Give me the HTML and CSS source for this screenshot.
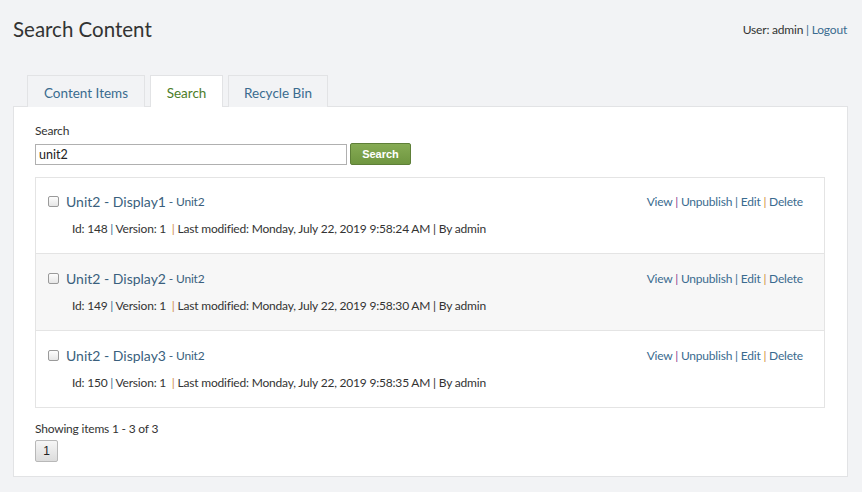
FILE: index.html
```html
<!DOCTYPE html>
<html>
<head>
<meta charset="utf-8">
<link rel="stylesheet" href="styles.css">
</head>
<body>
<div class="page">
  <header class="top">
    <h1 class="title">Search Content</h1>
    <div class="user">User: admin <span class="sep">|</span> <a class="link">Logout</a></div>
  </header>
  <nav class="tabs">
    <div class="tab t1">Content Items</div>
    <div class="tab t2 active">Search</div>
    <div class="tab t3">Recycle Bin</div>
  </nav>
  <section class="panel">
    <label class="label">Search</label>
    <div class="searchrow">
      <input class="input" type="text" value="unit2">
      <button class="btn">Search</button>
    </div>
    <div class="list">
      <div class="row">
        <div class="row-head">
          <div class="row-title"><span class="cb"></span><a class="name">Unit2 - Display1</a><span class="type"> - Unit2</span></div>
          <div class="actions"><a class="link">View</a> <span class="s1">|</span> <a class="link">Unpublish</a> <span class="s2">|</span> <a class="link">Edit</a> <span class="s3">|</span> <a class="link">Delete</a></div>
        </div>
        <div class="meta">Id: 148 <span class="s2">|</span> Version: 1 &nbsp;<span class="s3">|</span> Last modified: Monday, July 22, 2019 9:58:24 AM | By admin</div>
      </div>
      <div class="row alt">
        <div class="row-head">
          <div class="row-title"><span class="cb"></span><a class="name">Unit2 - Display2</a><span class="type"> - Unit2</span></div>
          <div class="actions"><a class="link">View</a> <span class="s1">|</span> <a class="link">Unpublish</a> <span class="s2">|</span> <a class="link">Edit</a> <span class="s3">|</span> <a class="link">Delete</a></div>
        </div>
        <div class="meta">Id: 149 <span class="s2">|</span> Version: 1 &nbsp;<span class="s3">|</span> Last modified: Monday, July 22, 2019 9:58:30 AM | By admin</div>
      </div>
      <div class="row">
        <div class="row-head">
          <div class="row-title"><span class="cb"></span><a class="name">Unit2 - Display3</a><span class="type"> - Unit2</span></div>
          <div class="actions"><a class="link">View</a> <span class="s1">|</span> <a class="link">Unpublish</a> <span class="s2">|</span> <a class="link">Edit</a> <span class="s3">|</span> <a class="link">Delete</a></div>
        </div>
        <div class="meta">Id: 150 <span class="s2">|</span> Version: 1 &nbsp;<span class="s3">|</span> Last modified: Monday, July 22, 2019 9:58:35 AM | By admin</div>
      </div>
    </div>
    <div class="showing">Showing items 1 - 3 of 3</div>
    <div class="pager"><span class="pagebtn">1</span></div>
  </section>
</div>
</body>
</html>
```
FILE: styles.css
```css
* { box-sizing: border-box; }
html, body { margin: 0; padding: 0; }
body {
  background: #f2f3f5;
  font-family: Lato, "Open Sans", sans-serif;
  color: #333;
  font-size: 12px;
  letter-spacing: -0.2px;
}
.page { padding: 0 15px 0 13px; width: 862px; }
.top {
  display: flex;
  justify-content: space-between;
  align-items: flex-start;
  height: 75px;
}
.title {
  margin: 0;
  padding-top: 15px;
  font-size: 20.5px;
  font-weight: 400;
  line-height: 28px;
  letter-spacing: 0;
  color: #333;
}
.user {
  padding-top: 21px;
  font-size: 12px;
  line-height: 18px;
  color: #333;
}
.link { color: #3a6b8f; text-decoration: none; }
.sep { color: #3a6b8f; }
.tabs {
  display: flex;
  gap: 5px;
  padding-left: 14px;
  height: 31px;
  position: relative;
  z-index: 1;
}
.tab {
  border: 1px solid #e2e3e5;
  border-bottom: none;
  background: #f2f3f5;
  color: #3a6b8f;
  font-size: 13.5px;
  letter-spacing: 0;
  line-height: 35px;
  height: 32px;
  text-align: center;
  white-space: nowrap;
}
.t1 { width: 118px; }
.t2 { width: 73px; }
.t3 { width: 100px; }
.tab.active {
  background: #fff;
  color: #4c7d2a;
}
.panel {
  background: #fff;
  border: 1px solid #e2e3e5;
  width: 835px;
  padding: 16px 22px 14px 21px;
}
.label {
  display: block;
  font-size: 12px;
  line-height: 16px;
  color: #333;
}
.searchrow {
  display: flex;
  gap: 3px;
  margin-top: 4px;
  align-items: center;
}
.input {
  width: 312px;
  height: 21px;
  border: 1px solid #b0b0b0;
  padding: 0 3px;
  font-family: Lato, sans-serif;
  font-size: 12.5px;
  color: #222;
  margin: 0;
}
.btn {
  width: 61px;
  height: 22px;
  border: 1px solid #5e7f38;
  border-radius: 2px;
  background: linear-gradient(#86ab54, #6f9640);
  color: #fff;
  font-family: "Liberation Sans", Arial, sans-serif;
  font-weight: bold;
  font-size: 11px;
  letter-spacing: 0;
  padding: 0;
  margin: 0;
}
.list {
  margin-top: 12px;
  border: 1px solid #e4e4e4;
  width: 790px;
}
.row {
  height: 77px;
  padding: 14px 21px 0 12px;
  border-top: 1px solid #e4e4e4;
}
.row:first-child { border-top: none; height: 75px; padding-top: 13px; }
.row.alt { background: #f7f7f7; }
.row-head {
  display: flex;
  justify-content: space-between;
  align-items: center;
  height: 20px;
}
.row-title { display: flex; align-items: center; }
.cb {
  width: 11px;
  height: 11px;
  border: 1px solid #9a9a9a;
  border-radius: 2px;
  background: linear-gradient(#fdfdfd, #e6e6e6);
  margin-right: 7px;
  margin-top: 1px;
}
.name {
  font-size: 14px;
  letter-spacing: 0;
  color: #3a5f7d;
}
.type {
  font-size: 12px;
  color: #3a5f7d;
  white-space: pre;
}
.actions {
  font-size: 12px;
  color: #3a6b8f;
}
.s1 { color: #8a3a8f; }
.s2 { color: #3a6b8f; }
.s3 { color: #d08a3a; }
.meta {
  margin-top: 10px;
  padding-left: 24px;
  font-size: 12px;
  color: #333;
}
.showing {
  margin-top: 13px;
  font-size: 12px;
  line-height: 16px;
}
.pager { margin-top: 3px; }
.pagebtn {
  display: inline-block;
  width: 23px;
  height: 22px;
  border: 1px solid #b8b8b8;
  border-radius: 2px;
  background: linear-gradient(#f6f6f6, #dcdcdc);
  font-family: "Liberation Sans", Arial, sans-serif;
  font-size: 12px;
  letter-spacing: 0;
  text-align: center;
  line-height: 20px;
  color: #222;
}
```
